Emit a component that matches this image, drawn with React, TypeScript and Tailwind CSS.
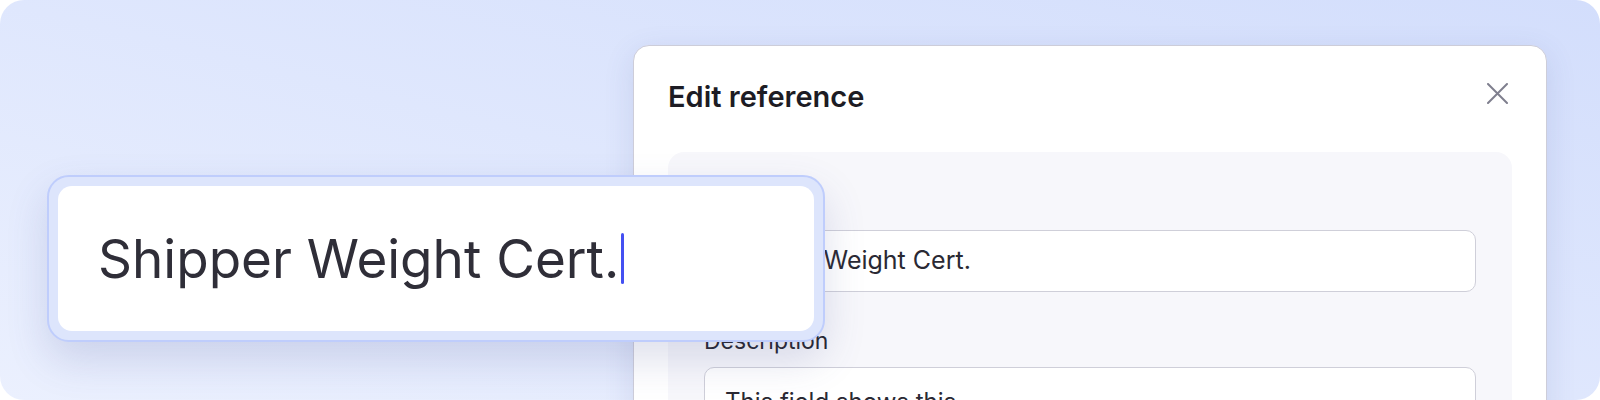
import React from "react";

function CloseIcon() {
  return (
    <svg width="21" height="21" viewBox="0 0 21 21" fill="none" className="text-[#7f7f8e]">
      <path d="M1 1L20 20M20 1L1 20" stroke="currentColor" strokeWidth="2" strokeLinecap="round" />
    </svg>
  );
}

function Field({ label, children }: { label: string; children: React.ReactNode }) {
  return (
    <div className="flex flex-col gap-[12px]">
      <label className="text-[23px] leading-[28px] text-[#26252e]">{label}</label>
      {children}
    </div>
  );
}

export default function App() {
  return (
    <div className="relative flex h-[400px] w-[1600px] justify-end overflow-hidden rounded-[24px] bg-linear-to-bl from-[#d3defc] to-[#ebf0fe] pr-[53px] pt-[45px] font-['Inter',sans-serif]">
      <div className="h-[440px] w-[914px] shrink-0 rounded-[16px] border border-[#cdcdd9] bg-white px-[34px] pt-[33px] shadow-[0_8px_30px_rgba(70,85,150,0.14)]">
        <div className="flex items-start justify-between pr-[4px]">
          <h2 className="text-[29px] font-semibold leading-[36px] text-[#1d1c24]">Edit reference</h2>
          <button className="mt-[4px]">
            <CloseIcon />
          </button>
        </div>

        <div className="mt-[37px] rounded-[16px] bg-[#f7f7fb] px-[36px] pt-[38px] pb-[40px]">
          <div className="flex flex-col gap-[35px]">
            <Field label="Name">
              <div className="flex h-[62px] items-center rounded-[10px] border-[1.5px] border-[#cfcfd9] bg-white px-[20px] text-[25px] text-[#2a2933]">
                Shipper Weight Cert.
              </div>
            </Field>
            <Field label="Description">
              <div className="h-[120px] rounded-[10px] border-[1.5px] border-[#cfcfd9] bg-white px-[20px] pt-[18px] text-[24px] leading-[32px] text-[#2a2933]">
                This field shows this
              </div>
            </Field>
          </div>
        </div>
      </div>

      <div className="absolute left-[47px] top-[175px] h-[167px] w-[778px] rounded-[22px] border-2 border-[#bfcdfc] bg-[#dde5fc] p-[9px] shadow-[0_18px_40px_rgba(70,85,150,0.18)]">
        <div className="flex h-full items-center rounded-[14px] bg-white pl-[40px]">
          <span className="text-[53px] leading-[60px] text-[#2f2e38]">Shipper Weight Cert.</span>
          <span className="ml-[2px] h-[51px] w-[3px] rounded-full bg-[#4450f2]" />
        </div>
      </div>
    </div>
  );
}
